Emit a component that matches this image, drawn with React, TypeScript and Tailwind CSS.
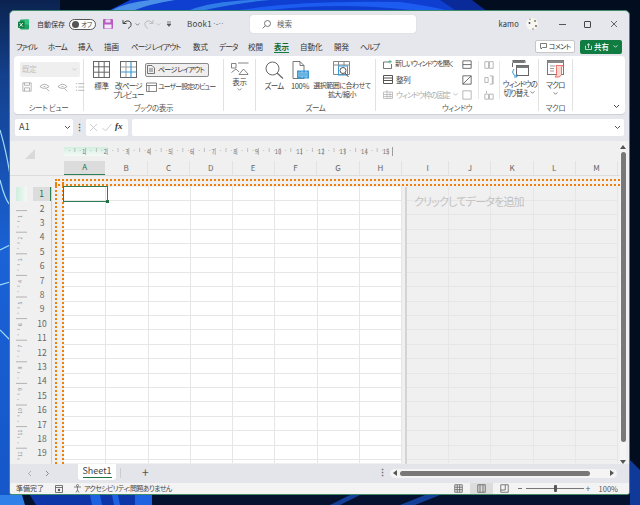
import React from "react";

const columns = ["A", "B", "C", "D", "E", "F", "G", "H"];
const columns2 = ["I", "J", "K", "L", "M"];
const rows = Array.from({ length: 19 }, (_, i) => i + 1);
const tabs = [
  { t: "ファイル", c: "w-[32px] tracking-[-1.4px]" },
  { t: "ホーム", c: "w-[30px] tracking-[-0.8px]" },
  { t: "挿入", c: "w-[26px]" },
  { t: "描画", c: "w-[27px]" },
  { t: "ページ レイアウト", c: "w-[62px] tracking-[-0.8px]" },
  { t: "数式", c: "w-[26px]" },
  { t: "データ", c: "w-[29px] tracking-[-0.8px]" },
  { t: "校閲", c: "w-[26px]" },
  { t: "表示", c: "w-[26px]" },
  { t: "自動化", c: "w-[34px]" },
  { t: "開発", c: "w-[26px]" },
  { t: "ヘルプ", c: "w-[24px] tracking-[-0.8px]" },
];

function Wallpaper() {
  return (
    <svg className="absolute inset-0" width="640" height="505" viewBox="0 0 640 505">
      <defs>
        <linearGradient id="bgL" x1="0" y1="0" x2="0" y2="1">
          <stop offset="0" stopColor="#0b2350" />
          <stop offset="0.15" stopColor="#14408c" />
          <stop offset="0.5" stopColor="#1a62d6" />
          <stop offset="1" stopColor="#1556c8" />
        </linearGradient>
      </defs>
      <rect width="640" height="505" fill="#030d20" />
      <rect width="60" height="505" fill="url(#bgL)" />
      <path d="M110 10 L130 0 L470 0 L485 10 Z" fill="#0f3fd0" />
      <path d="M112 10 Q125 3 150 0 L175 0 Q150 4 135 10 Z" fill="#4a8fe8" />
      <path d="M190 10 Q210 2 250 0 L270 0 Q235 3 205 10 Z" fill="#2f7be8" />
      <path d="M240 10 Q300 0 400 2 Q430 6 445 10 L410 10 Q340 2 270 10 Z" fill="#1d5cf0" />
      <path d="M440 0 L472 0 L485 10 L455 10 Z" fill="#0a2a9a" />
      <path d="M0 180 Q5 200 10 205 M0 250 L10 245 M0 285 L10 282 M0 330 L10 340 M0 130 Q6 150 10 175" stroke="#9fdcf5" strokeWidth="1.2" fill="none" />
      <rect x="0" y="495" width="640" height="10" fill="#04122f" />
      <path d="M0 495 L22 495 L25 505 L0 505 Z" fill="#2f80e8" />
      <path d="M30 495 L150 495 L152 505 L36 505 Z" fill="#0d35a8" />
      <path d="M90 495 L100 495 L102 505 L92 505 Z M112 495 L118 495 L120 505 L114 505 Z M135 495 L152 495 L152 505 L135 505 Z" fill="#1d62e0" />
      <path d="M330 505 L350 495 L360 495 L340 505 Z M400 505 L425 495 L440 495 L415 505 Z" fill="#124099" />
      <path d="M630 460 L640 470 L640 505 L630 505 Z" fill="#0f3a9a" />
    </svg>
  );
}

function Chevron({ className = "" }: { className?: string }) {
  return (
    <svg width="7" height="5" viewBox="0 0 7 5" className={`shrink-0 ${className}`}>
      <path d="M1 1 L3.5 3.5 L6 1" stroke="currentColor" strokeWidth="1" fill="none" />
    </svg>
  );
}

function GridIcon({ breaks = false }: { breaks?: boolean }) {
  return (
    <svg width="17" height="17" viewBox="0 0 17 17" fill="none" className="shrink-0">
      <rect x="0.5" y="0.5" width="16" height="16" stroke="#666" fill="#fff" />
      {breaks ? (
        <path d="M0.5 6 H16 M6 0.5 V16" stroke="#999" />
      ) : (
        <path d="M0.5 5.8 H16 M0.5 11.2 H16 M5.8 0.5 V16 M11.2 0.5 V16" stroke="#666" />
      )}
      {breaks && <path d="M11 0.5 V16.5 M0.5 11 H16.5" stroke="#3a9ad9" strokeWidth="1.2" />}
    </svg>
  );
}

function SmallIcon({ d, color = "#aaa", size = 12 }: { d: string; color?: string; size?: number }) {
  return (
    <svg width={size} height={size} viewBox="0 0 12 12" fill="none" className="shrink-0">
      <path d={d} stroke={color} strokeWidth="1" />
    </svg>
  );
}

function Group({ width, label, children }: { width: string; label: string; children: React.ReactNode }) {
  return (
    <div className={`${width} h-[52px] mt-[3px] flex flex-col border-r border-[#e2e2e2] shrink-0`}>
      <div className="h-[42px] flex">{children}</div>
      <div className="h-[10px] text-center leading-[14px] text-[7.5px] text-[#555]">{label}</div>
    </div>
  );
}

function Ruler() {
  const nums = Array.from({ length: 15 }, (_, i) => i + 1);
  const ticks = Array.from({ length: 61 }, (_, i) => i);
  return (
    <svg width="340" height="14" viewBox="0 0 340 14" className="block">
      <defs>
        <linearGradient id="rg" x1="0" y1="0" x2="0" y2="1">
          <stop offset="0" stopColor="#d2efe0" />
          <stop offset="1" stopColor="#f4f9f6" />
        </linearGradient>
      </defs>
      <rect x="0" y="0" width="43" height="9" fill="url(#rg)" />
      {ticks.map((i) => (
        <line key={i} x1={i * 5.4} x2={i * 5.4} y1={i % 4 === 2 ? 1 : 3} y2={i % 4 === 2 ? 5 : 4} stroke="#aaa" strokeWidth="0.7" opacity={i % 4 === 0 ? 0 : 1} />
      ))}
      {nums.map((n) => (
        <React.Fragment key={n}>
          <text x={n * 21.6 - 2} y="7" fontSize="6" fill="#777" textAnchor="middle">{n}</text>
          <line x1={n * 21.6} x2={n * 21.6} y1="1" y2="8" stroke="#999" strokeWidth="0.7" />
        </React.Fragment>
      ))}
      <line x1="328.5" x2="328.5" y1="0" y2="9" stroke="#888" strokeWidth="0.8" />
    </svg>
  );
}

function VRuler() {
  const nums = Array.from({ length: 12 }, (_, i) => i + 1);
  return (
    <svg width="12" height="278" viewBox="0 0 12 278" className="block">
      <defs>
        <linearGradient id="vg" x1="0" y1="0" x2="1" y2="0">
          <stop offset="0" stopColor="#cfeede" />
          <stop offset="1" stopColor="#f4f9f6" />
        </linearGradient>
      </defs>
      <rect x="0" y="0" width="11" height="14" fill="url(#vg)" />
      {nums.map((n) => {
        const y = n * 21.6 + 2;
        return (
          <React.Fragment key={n}>
            <line x1="0" x2="11" y1={y} y2={y} stroke="#999" strokeWidth="0.7" />
            <text x="0" y="0" fontSize="5" fill="#888" textAnchor="middle" transform={`translate(6 ${y + 6}) rotate(-90)`}>{n}</text>
            <line x1="1" x2="4" y1={y + 10.8} y2={y + 10.8} stroke="#aaa" strokeWidth="0.7" />
            <line x1="1" x2="3" y1={y + 16.2} y2={y + 16.2} stroke="#bbb" strokeWidth="0.7" />
          </React.Fragment>
        );
      })}
    </svg>
  );
}

function TitleBar() {
  return (
    <div className="h-[27px] flex items-center shrink-0 relative">
      <svg width="11" height="11" viewBox="0 0 11 11" className="ml-[8px] shrink-0">
        <rect x="2" y="0.5" width="9" height="10" rx="1" fill="#21a366" />
        <rect x="6.5" y="0.5" width="4.5" height="5" fill="#33c481" />
        <rect x="0" y="2.5" width="6.5" height="6.5" rx="0.8" fill="#107c41" />
        <path d="M1.6 4 L4.8 7.6 M4.8 4 L1.6 7.6" stroke="#fff" strokeWidth="0.9" />
      </svg>
      <span className="ml-[8px] text-[7px] text-[#333] w-[32px] whitespace-nowrap">自動保存</span>
      <div className="w-[27px] h-[11px] rounded-full border border-[#555] bg-white flex items-center pl-[2px] gap-[2px] shrink-0">
        <span className="w-[7px] h-[7px] rounded-full bg-[#555]" />
        <span className="text-[6.5px] text-[#444] leading-none tracking-[-0.3px]">オフ</span>
      </div>
      <svg width="10" height="10" viewBox="0 0 10 10" className="ml-[7px] shrink-0">
        <rect x="0" y="0" width="10" height="10" rx="1" fill="#b45cc0" />
        <rect x="2.5" y="0.5" width="5" height="3" fill="#eed8f2" />
        <rect x="1.5" y="5.5" width="7" height="4" fill="#f6e8f8" />
      </svg>
      <svg width="11" height="10" viewBox="0 0 11 10" className="ml-[9px] shrink-0" fill="none">
        <path d="M1 1 V4.5 H4.5 M1 4.5 Q4 1 7 2 Q10 3.5 9 6.5 Q8 8.5 6 9.5" stroke="#444" strokeWidth="1" />
      </svg>
      <Chevron className="ml-[1px] text-[#666] scale-75" />
      <svg width="11" height="10" viewBox="0 0 11 10" className="ml-[2px] shrink-0" fill="none">
        <path d="M10 1 V4.5 H6.5 M10 4.5 Q7 1 4 2 Q1 3.5 2 6.5 Q3 8.5 5 9.5" stroke="#bbb" strokeWidth="1" />
      </svg>
      <Chevron className="ml-[1px] text-[#bbb] scale-75" />
      <svg width="6" height="6" viewBox="0 0 6 6" className="ml-[4px] shrink-0">
        <path d="M1 1 H5 M1 3 H5 L3 5.4 Z" stroke="#555" strokeWidth="0.7" fill="#555" />
      </svg>
      <span className="ml-[15px] w-[22px] text-[8px] text-[#444] tracking-[0.2px]">Book1</span>
      <span className="ml-[4px] w-[10px] text-[8px] text-[#666] leading-none font-['Liberation_Sans',sans-serif] whitespace-nowrap">·-··</span>
      <div className="ml-[27px] w-[166px] h-[18px] bg-white rounded-[3px] shadow-[0_0_1px_#bbb] flex items-center pl-[12px] shrink-0">
        <svg width="9" height="9" viewBox="0 0 9 9" fill="none">
          <circle cx="5.5" cy="3.5" r="3" stroke="#555" strokeWidth="0.8" />
          <path d="M3.2 5.8 L0.7 8.4" stroke="#555" strokeWidth="0.8" />
        </svg>
        <span className="ml-[6px] text-[7.5px] text-[#666]">検索</span>
      </div>
      <span className="ml-auto text-[7.5px] text-[#333] tracking-[0.2px]">kamo</span>
      <svg width="14" height="14" viewBox="0 0 14 14" className="ml-[6px] shrink-0">
        <circle cx="7" cy="7" r="6" fill="#f6f6f3" />
        <circle cx="4.5" cy="6" r="0.9" fill="#4a4038" />
        <circle cx="10" cy="4" r="1" fill="#8a7a55" />
        <circle cx="11" cy="9" r="0.9" fill="#6a5a45" />
        <circle cx="5" cy="2.2" r="0.8" fill="#99906a" />
        <circle cx="8" cy="12" r="0.7" fill="#6a5a45" />
      </svg>
      <div className="ml-[20px] w-[7px] h-[1px] bg-[#555]" />
      <div className="ml-[18px] w-[7px] h-[7px] border border-[#444] rounded-[1px]" />
      <svg width="8" height="8" viewBox="0 0 8 8" className="ml-[19px] mr-[11px] shrink-0">
        <path d="M1 1 L7 7 M7 1 L1 7" stroke="#444" strokeWidth="0.8" />
      </svg>
    </div>
  );
}

function TabRow() {
  return (
    <div className="h-[18px] flex items-center shrink-0 pl-[6px]">
      <div className="flex items-center text-[7.5px] text-[#333]">
        {tabs.map(({ t, c }) => (
          <span key={t} className={`${c} shrink-0 whitespace-nowrap`}>
            <span className={t === "表示" ? "inline-block font-semibold text-[#0e6b38] border-b-[1.5px] border-[#107c41] leading-[11px]" : "inline-block leading-[11px]"}>{t}</span>
          </span>
        ))}
      </div>
      <div className="ml-auto mr-[7px] flex items-center gap-[5px]">
        <div className="w-[40px] h-[13px] bg-white border border-[#c8c8c8] rounded-[2px] flex items-center justify-center gap-[2px] text-[7px] tracking-[-0.6px] text-[#333] whitespace-nowrap">
          <svg width="7" height="7" viewBox="0 0 7 7" fill="none" className="shrink-0">
            <path d="M0.5 0.5 H6.5 V4.5 H2.5 L1 6 V4.5 H0.5 Z" stroke="#444" strokeWidth="0.7" />
          </svg>
          コメント
        </div>
        <div className="w-[42px] h-[14px] bg-[#107c41] rounded-[2px] flex items-center pl-[5px] text-[7.5px] text-white font-medium">
          <svg width="7" height="7" viewBox="0 0 7 7" fill="none" className="mr-[2px]">
            <path d="M1 3 H0.5 V6.5 H6.5 V3 H6 M3.5 5 V0.8 M2 2.2 L3.5 0.8 L5 2.2" stroke="#fff" strokeWidth="0.7" />
          </svg>
          共有
          <Chevron className="ml-auto mr-[3px] scale-75" />
        </div>
      </div>
    </div>
  );
}

function Ribbon() {
  const grey = "#aaaaaa";
  return (
    <div className="h-[58px] mx-[4px] bg-white rounded-[4px] shadow-[0_1px_1px_#cfcfd4] flex shrink-0 text-[7.5px] text-[#444] leading-[9.5px] tracking-[-0.35px]">
      <Group width="w-[70px]" label="シート ビュー">
        <div className="pl-[6px] pt-[3px]">
          <div className="w-[60px] h-[15px] bg-[#efefef] rounded-[2px] flex items-center px-[2px] text-[#c0c0c0]">
            既定
            <Chevron className="ml-auto text-[#c0c0c0] scale-75" />
          </div>
          <div className="mt-[5px] flex gap-[7px] pl-[2px]">
            <SmallIcon d="M1 1 H11 V11 H1 Z M3 1 V4 H9 V1 M3 11 V7 H9 V11" size={10} color={grey} />
            <SmallIcon d="M1 5 Q6 0 11 5 Q6 9 1 5 Z M5 5 H7 M8 7 L11 10" size={11} color={grey} />
            <SmallIcon d="M1 5 Q6 0 11 5 Q6 9 1 5 Z M5 5 H7 M8 7 L11 10" size={11} color={grey} />
            <SmallIcon d="M1 2 H2.5 M4 2 H11 M1 6 H2.5 M4 6 H11 M1 10 H2.5 M4 10 H11" size={10} color={grey} />
          </div>
        </div>
      </Group>

      <Group width="w-[140px]" label="ブックの表示">
        <div className="pl-[9px] pt-[2px] flex flex-col items-center w-[26px] shrink-0">
          <GridIcon />
          <span className="mt-[3px] whitespace-nowrap">標準</span>
        </div>
        <div className="ml-[5px] pt-[2px] flex flex-col items-center w-[27px] shrink-0 tracking-[-0.7px] whitespace-nowrap">
          <GridIcon breaks />
          <span className="mt-[3px]">改ページ</span>
          <span>プレビュー</span>
        </div>
        <div className="ml-[3px] pt-[4px] flex flex-col">
          <div className="w-[64px] h-[14px] bg-[#efefef] border border-[#8a8a8a] rounded-[2px] flex items-center pl-[1px] gap-[3px] text-[7px] text-[#333] whitespace-nowrap tracking-[-0.75px]">
            <svg width="8" height="9" viewBox="0 0 8 9" fill="none" className="shrink-0">
              <path d="M0.5 0.5 H5 L7.5 3 V8.5 H0.5 Z M2 4 H6 M2 6 H6" stroke="#555" strokeWidth="0.8" />
            </svg>
            ページ レイアウト
          </div>
          <div className="mt-[5px] flex items-center gap-[1px] whitespace-nowrap pl-[1px] text-[7px] tracking-[-1px]">
            <svg width="11" height="10" viewBox="0 0 11 10" fill="none" className="shrink-0">
              <path d="M0.5 1 H10.5 V9.5 H0.5 Z M0.5 3.5 H10.5 M3 3.5 V9.5" stroke="#666" strokeWidth="0.8" />
            </svg>
            ユーザー設定のビュー
          </div>
        </div>
      </Group>

      <Group width="w-[32px]" label="">
        <div className="w-full pt-[2px] flex flex-col items-center">
          <svg width="18" height="14" viewBox="0 0 18 14" fill="none">
            <path d="M0.5 2.5 H5 V7 H0.5 Z M7 2 H17.5 M0.5 11.5 L5 8 L8 11 M8 13.5 L12.5 8 L17 13 V13.5 Z" stroke="#666" strokeWidth="0.8" />
          </svg>
          <span className="mt-[2px]">表示</span>
          <Chevron className="mt-[1px] text-[#666] scale-75" />
        </div>
      </Group>

      <Group width="w-[120px]" label="ズーム">
        <div className="pl-[8px] pt-[2px] flex flex-col items-center w-[28px] shrink-0">
          <svg width="19" height="18" viewBox="0 0 19 18" fill="none">
            <circle cx="7.5" cy="7.5" r="6.5" stroke="#666" />
            <path d="M12 12 L18 17.5" stroke="#666" strokeWidth="1.2" />
          </svg>
          <span className="mt-[2px] whitespace-nowrap tracking-[-0.7px]">ズーム</span>
        </div>
        <div className="ml-[7px] pt-[2px] flex flex-col items-center w-[18px] shrink-0">
          <svg width="17" height="18" viewBox="0 0 17 18" fill="none">
            <path d="M1 0.5 H8 L12 4.5 V17.5 H1 Z M8 0.5 V4.5 H12" stroke="#777" fill="#fff" />
            <rect x="5" y="9.5" width="12" height="8" fill="#3a9ad9" />
            <path d="M7 11 V16 M9 11 H11 V16 H9 Z M13 11 H15 V16 H13 Z" stroke="#d8eefa" strokeWidth="0.6" />
          </svg>
          <span className="mt-[2px]">100%</span>
        </div>
        <div className="ml-[5px] pt-[2px] flex flex-col items-center w-[56px] shrink-0 text-[7px] tracking-[-0.5px] whitespace-nowrap">
          <svg width="18" height="18" viewBox="0 0 18 18" fill="none">
            <path d="M0.5 0.5 H16.5 V13.5 H0.5 Z M0.5 4 H16.5 M5.5 0.5 V13.5 M11 0.5 V5" stroke="#888" />
            <rect x="5.5" y="5" width="9" height="9" stroke="#3a9ad9" />
            <circle cx="10" cy="9.5" r="3" stroke="#555" fill="#fff" />
            <path d="M12 12 L15.5 16" stroke="#555" />
          </svg>
          <span className="mt-[2px]">選択範囲に合わせて</span>
          <span>拡大/縮小</span>
        </div>
      </Group>

      <Group width="w-[163px]" label="ウィンドウ">
        <div className="pl-[7px] pt-[1px] flex flex-col gap-[5px] w-[85px] shrink-0 whitespace-nowrap">
          <div className="flex items-center gap-[3px] h-[9px] text-[7px] tracking-[-0.9px]">
            <svg width="9" height="9" viewBox="0 0 9 9" fill="none" className="shrink-0">
              <path d="M0.5 2 H6 M0.5 2 V8.5 H8.5 V4" stroke="#555" strokeWidth="0.8" />
              <path d="M7 0 V3.5 M5.2 1.7 H8.8" stroke="#21a366" strokeWidth="0.8" />
            </svg>
            新しいウィンドウを開く
          </div>
          <div className="flex items-center gap-[3px] h-[10px] mt-[1px]">
            <svg width="10" height="9" viewBox="0 0 10 9" fill="none" className="shrink-0">
              <path d="M0.5 0.5 H9.5 V8.5 H0.5 Z M0.5 3 H9.5 M0.5 5.5 H9.5" stroke="#555" />
            </svg>
            整列
          </div>
          <div className="flex items-center gap-[3px] h-[10px] text-[#aaa] tracking-[-0.85px]">
            <svg width="10" height="9" viewBox="0 0 10 9" fill="none" className="shrink-0">
              <path d="M0.5 2 H9.5 V8.5 H0.5 Z M0.5 4.5 H9.5 M0.5 6.5 H9.5 M4 0 V8.5 M7 2 V8.5" stroke="#b5b5b5" strokeWidth="0.8" />
            </svg>
            ウィンドウ枠の固定
            <Chevron className="-ml-[1px] text-[#aaa] scale-75" />
          </div>
        </div>
        <div className="pt-[1px] flex flex-col gap-[5px] items-center w-[12px] h-[38px] shrink-0">
          <SmallIcon d="M1 1 H11 V10 H1 Z M1 5.5 H11" color="#555" size={10} />
          <SmallIcon d="M1 1 H11 V11 H1 Z M1 11 L11 1" color="#555" size={10} />
          <SmallIcon d="M1 1 H11 V11 H1 Z" color="#aaa" size={10} />
        </div>
        <div className="ml-[5px] w-[1px] h-[38px] mt-[2px] bg-[#e6e6e6] shrink-0" />
        <div className="ml-[4px] pt-[1px] flex flex-col gap-[5px] items-center w-[11px] shrink-0">
          <SmallIcon d="M1 2 H5.5 V10 H1 Z M6.5 2 H11 V10 H6.5 Z" size={10} />
          <SmallIcon d="M1 3 H5 V9 H1 Z M7 1 H10 V11 H7 M11 1 V11" size={10} />
          <SmallIcon d="M1 5 H5.5 V11 H1 Z M6.5 5 H11 V11 H6.5 Z M3 1 V4" size={10} />
        </div>
        <div className="ml-[5px] w-[1px] h-[38px] mt-[2px] bg-[#e6e6e6] shrink-0" />
        <div className="ml-[3px] pt-[1px] flex flex-col items-center w-[34px] shrink-0 tracking-[-0.8px] whitespace-nowrap">
          <svg width="18" height="18" viewBox="0 0 18 18" fill="none">
            <path d="M1.5 0.5 H14 V3" stroke="#666" />
            <rect x="1.5" y="0.5" width="12" height="2.5" fill="#777" />
            <path d="M1.5 3 V7" stroke="#666" />
            <rect x="5.5" y="5.5" width="12" height="10" fill="#fff" stroke="#666" />
            <rect x="5.5" y="5.5" width="12" height="2.5" fill="#777" />
            <path d="M3 9 Q0 12 3 15 L6 16.5 M6 14 V17 H3" stroke="#3a9ad9" />
          </svg>
          <span className="mt-[1px]">ウィンドウの</span>
          <span className="flex items-center">切り替え<Chevron className="ml-[1px] scale-75 text-[#555]" /></span>
        </div>
      </Group>

      <Group width="w-[34px]" label="マクロ">
        <div className="w-full pt-[1px] flex flex-col items-center">
          <svg width="17" height="18" viewBox="0 0 17 18" fill="none">
            <rect x="0.5" y="0.5" width="16" height="14" fill="#fff" stroke="#777" />
            <rect x="0.5" y="0.5" width="16" height="2.5" fill="#888" />
            <path d="M3 6 H8 M3 8.5 H7 M3 11 H7" stroke="#999" />
            <path d="M9 5.5 H16 L14.5 7 V15 L12 17 H8 L9.5 15 V7 Z" fill="#fbd7d2" stroke="#e8544a" strokeWidth="0.8" />
          </svg>
          <span className="mt-[2px] tracking-[-0.7px]">マクロ</span>
          <Chevron className="mt-[2px] text-[#555] scale-75" />
        </div>
      </Group>

      <div className="ml-auto self-end mb-[5px] mr-[5px]">
        <Chevron className="text-[#444]" />
      </div>
    </div>
  );
}

function FormulaBar() {
  return (
    <div className="h-[17px] mt-[5px] flex items-stretch pl-[5px] pr-[5px] shrink-0 text-[#444]">
      <div className="w-[58px] bg-white rounded-[2px] flex items-center pl-[4px] pr-[2px] text-[9px] tracking-[0.4px]">
        A1
        <Chevron className="ml-auto text-[#555]" />
      </div>
      <div className="w-[12px] flex items-center justify-center text-[9px] leading-none font-bold text-[#555]">⋮</div>
      <div className="w-[42px] ml-[1px] bg-white rounded-[2px] flex items-center pl-[3px]">
        <svg width="9" height="9" viewBox="0 0 9 9" className="mr-[4px]">
          <path d="M1 1 L8 8 M8 1 L1 8" stroke="#c4c4c4" strokeWidth="0.8" />
        </svg>
        <svg width="10" height="9" viewBox="0 0 10 9" className="mr-[3px]">
          <path d="M0.5 5 L3.5 8 L9.5 1" stroke="#c4c4c4" strokeWidth="0.8" fill="none" />
        </svg>
        <span className="font-['Liberation_Serif',serif] italic text-[9px] font-bold text-[#333]">fx</span>
      </div>
      <div className="flex-1 ml-[4px] bg-white rounded-[2px] flex items-center justify-end pr-[3px]">
        <Chevron className="text-[#555]" />
      </div>
    </div>
  );
}

function HeaderCell({ label, active = false }: { label: string; active?: boolean }) {
  return (
    <div className={active ? "h-full flex-1 bg-[#dcdcdc] border-b-[1.5px] border-[#2e7d55] flex items-center justify-center text-[#217346]" : "h-full flex-1 border-r border-[#e2e2e2] flex items-center justify-center"}>
      {label}
    </div>
  );
}

function Page({ cols, white }: { cols: string[]; white: boolean }) {
  return (
    <div className={white ? "bg-white" : ""}>
      {rows.map((r) => (
        <div key={r} className="flex h-[14.4px] border-b border-[#e6e6e6]">
          {cols.map((c) => (
            <div key={c} className="flex-1 border-r border-[#e6e6e6]" />
          ))}
        </div>
      ))}
      <div className="flex h-[3px]">
        {cols.map((c) => (
          <div key={c} className="flex-1 border-r border-[#e6e6e6]" />
        ))}
      </div>
    </div>
  );
}

function Sheet() {
  return (
    <div className="h-[323px] mt-[5px] flex shrink-0 relative bg-[#f0f0f0] overflow-hidden text-[8px]">
      <div className="w-[611px] shrink-0 flex flex-col">
        <div className="h-[20px] flex shrink-0">
          <div className="w-[54px] shrink-0 pl-[15px] pt-[8px]">
            <svg width="10" height="10" viewBox="0 0 10 10">
              <path d="M10 0 V10 H0 Z" fill="#d9d9d9" />
            </svg>
          </div>
          <div className="pt-[6px]">
            <Ruler />
          </div>
        </div>
        <div className="h-[15px] flex shrink-0 text-[8px] text-[#666] border-b border-[#dcdcdc]">
          <div className="w-[54px] shrink-0" />
          <div className="w-[338px] flex h-full">
            {columns.map((c) => (
              <HeaderCell key={c} label={c} active={c === "A"} />
            ))}
          </div>
          <div className="w-[5px] shrink-0" />
          <div className="w-[211px] flex h-full">
            {columns2.map((c) => (
              <HeaderCell key={c} label={c} />
            ))}
          </div>
        </div>
        <div className="h-[11px] shrink-0" />
        <div className="flex flex-1">
          <div className="w-[6px] shrink-0" />
          <div className="w-[12px] shrink-0">
            <VRuler />
          </div>
          <div className="w-[5px] shrink-0" />
          <div className="w-[19px] shrink-0 border-r border-[#cfcfcf]">
            {rows.map((r) => (
              <div key={r} className={r === 1 ? "h-[14.4px] bg-[#dcdcdc] border-r-[1.5px] border-[#2e7d55] flex items-center justify-center text-[#217346] text-[8.5px]" : "h-[14.4px] flex items-center justify-center text-[#666] text-[8.5px]"}>
                {r}
              </div>
            ))}
          </div>
          <div className="w-[12px] shrink-0" />
          <div className="w-[338px] shrink-0">
            <Page cols={columns} white />
          </div>
          <div className="w-[5px] shrink-0">
            <div className="ml-[3px] w-[1.5px] h-full bg-[#d4d4d4]" />
          </div>
          <div className="w-[211px] shrink-0">
            <Page cols={columns2} white={false} />
          </div>
        </div>
      </div>
      <div className="w-[7px] ml-[-1px] mr-[3px] bg-[#f4f4f4] flex flex-col items-center pt-[4px] rounded-[3px] h-full">
        <svg width="6" height="4" viewBox="0 0 6 4"><path d="M3 0 L6 4 H0 Z" fill="#555" /></svg>
        <div className="w-[5px] h-[290px] mt-[3px] bg-[#787878] rounded-full" />
        <svg width="6" height="4" viewBox="0 0 6 4" className="mt-[18px]"><path d="M3 4 L6 0 H0 Z" fill="#555" /></svg>
      </div>

      <div className="absolute left-[45px] right-[9px] top-[38px] h-[7px] border-t-2 border-b-2 border-r-2 border-dotted border-[#f07f09]" />
      <div className="absolute left-[45px] w-[9px] top-[38px] bottom-0 border-l-2 border-r-2 border-dotted border-[#f07f09]" />
      <div className="absolute left-[53px] top-[45px] w-[45px] h-[16px] border-[1.5px] border-[#2e7d55]" />
      <div className="absolute left-[96px] top-[59px] w-[3px] h-[3px] bg-[#217346]" />
      <div className="absolute left-[404px] top-[52px] text-[11px] leading-[16px] text-[#c2c2c2] whitespace-nowrap tracking-[-0.8px]">クリックしてデータを追加</div>
    </div>
  );
}

function TabBar() {
  return (
    <div className="h-[19px] flex items-start shrink-0 bg-[#e4e5ea] text-[#666]">
      <Chevron className="rotate-90 ml-[16px] mt-[7px] text-[#aaa]" />
      <Chevron className="-rotate-90 ml-[11px] mt-[7px] text-[#888]" />
      <div className="ml-[27px] w-[38px] h-[16px] bg-white rounded-b-[3px] flex flex-col items-center text-[9px] text-[#444] leading-[13px]">
        <span>Sheet1</span>
        <div className="w-[29px] h-[1px] bg-[#217346]" />
      </div>
      <div className="ml-[4px] mt-[4px] w-[1px] h-[10px] bg-[#cdcdcd]" />
      <span className="ml-[21px] mt-[1px] text-[12px] leading-[14px] text-[#555]">+</span>
      <span className="ml-[229px] mt-[3px] text-[9px] leading-[12px] font-bold text-[#666]">⋮</span>
      <div className="ml-[3px] mt-[5px] w-[227px] h-[9px] bg-[#f4f4f4] rounded-full flex items-center pl-[3px] shrink-0">
        <svg width="4" height="6" viewBox="0 0 4 6"><path d="M0 3 L4 0 V6 Z" fill="#555" /></svg>
        <div className="ml-[3px] w-[190px] h-[5px] bg-[#787878] rounded-full" />
        <svg width="4" height="6" viewBox="0 0 4 6" className="ml-[20px]"><path d="M4 3 L0 0 V6 Z" fill="#555" /></svg>
      </div>
    </div>
  );
}

function StatusBar() {
  return (
    <div className="h-[12px] flex items-center bg-[#f3f3f3] text-[7px] text-[#444] shrink-0 whitespace-nowrap">
      <span className="ml-[6px] w-[28px]">準備完了</span>
      <svg width="8" height="8" viewBox="0 0 8 8" fill="none" className="ml-[11px] shrink-0">
        <path d="M0.5 0.5 H7.5 V7.5 H0.5 Z M0.5 2.5 H7.5" stroke="#555" strokeWidth="0.8" />
        <circle cx="4" cy="5" r="1.2" fill="#555" />
      </svg>
      <svg width="9" height="9" viewBox="0 0 9 9" fill="none" className="ml-[10px] shrink-0">
        <circle cx="4.5" cy="1.5" r="1" stroke="#555" strokeWidth="0.7" />
        <path d="M1 3 H8 M4.5 3 V6 L3 8.5 M4.5 6 L6 8.5" stroke="#555" strokeWidth="0.7" />
      </svg>
      <span className="ml-[2px] tracking-[-0.65px]">アクセシビリティ: 問題ありません</span>
      <div className="ml-auto flex items-center h-full">
        <div className="w-[23px] h-full flex items-center justify-center">
          <SmallIcon d="M1 1 H11 V11 H1 Z M1 4.3 H11 M1 7.6 H11 M4.3 1 V11 M7.6 1 V11" color="#555" size={9} />
        </div>
        <div className="w-[23px] h-full bg-[#dcdcdc] flex items-center justify-center">
          <SmallIcon d="M1 1 H11 V11 H1 Z M4 1 V11 M8 1 V11" color="#555" size={9} />
        </div>
        <div className="w-[23px] h-full flex items-center justify-center">
          <SmallIcon d="M1 1 H11 V11 H1 Z M1 8 H7 V1" color="#555" size={9} />
        </div>
        <span className="ml-[2px] w-[4px] h-[1px] bg-[#777]" />
        <div className="ml-[4px] w-[58px] h-[1px] bg-[#777] relative">
          <div className="absolute left-[28px] -top-[3px] w-[3px] h-[7px] bg-[#555] rounded-[1px]" />
        </div>
        <span className="ml-[2px] text-[9px] leading-none text-[#666]">+</span>
        <span className="ml-[8px] mr-[11px] text-[7.5px] text-[#555]">100%</span>
      </div>
    </div>
  );
}

export default function App() {
  return (
    <div className="relative w-[640px] h-[505px] overflow-hidden font-['Noto_Sans_CJK_JP','Noto_Sans',sans-serif] [font-feature-settings:'palt']">
      <Wallpaper />
      <div className="relative ml-[9px] mt-[9.5px] w-[621px] h-[485px] flex flex-col bg-[#e6e7ec] rounded-t-[5px] rounded-b-[3px] border border-[#3f8c68] overflow-hidden">
        <TitleBar />
        <TabRow />
        <Ribbon />
        <FormulaBar />
        <Sheet />
        <TabBar />
        <StatusBar />
      </div>
    </div>
  );
}
